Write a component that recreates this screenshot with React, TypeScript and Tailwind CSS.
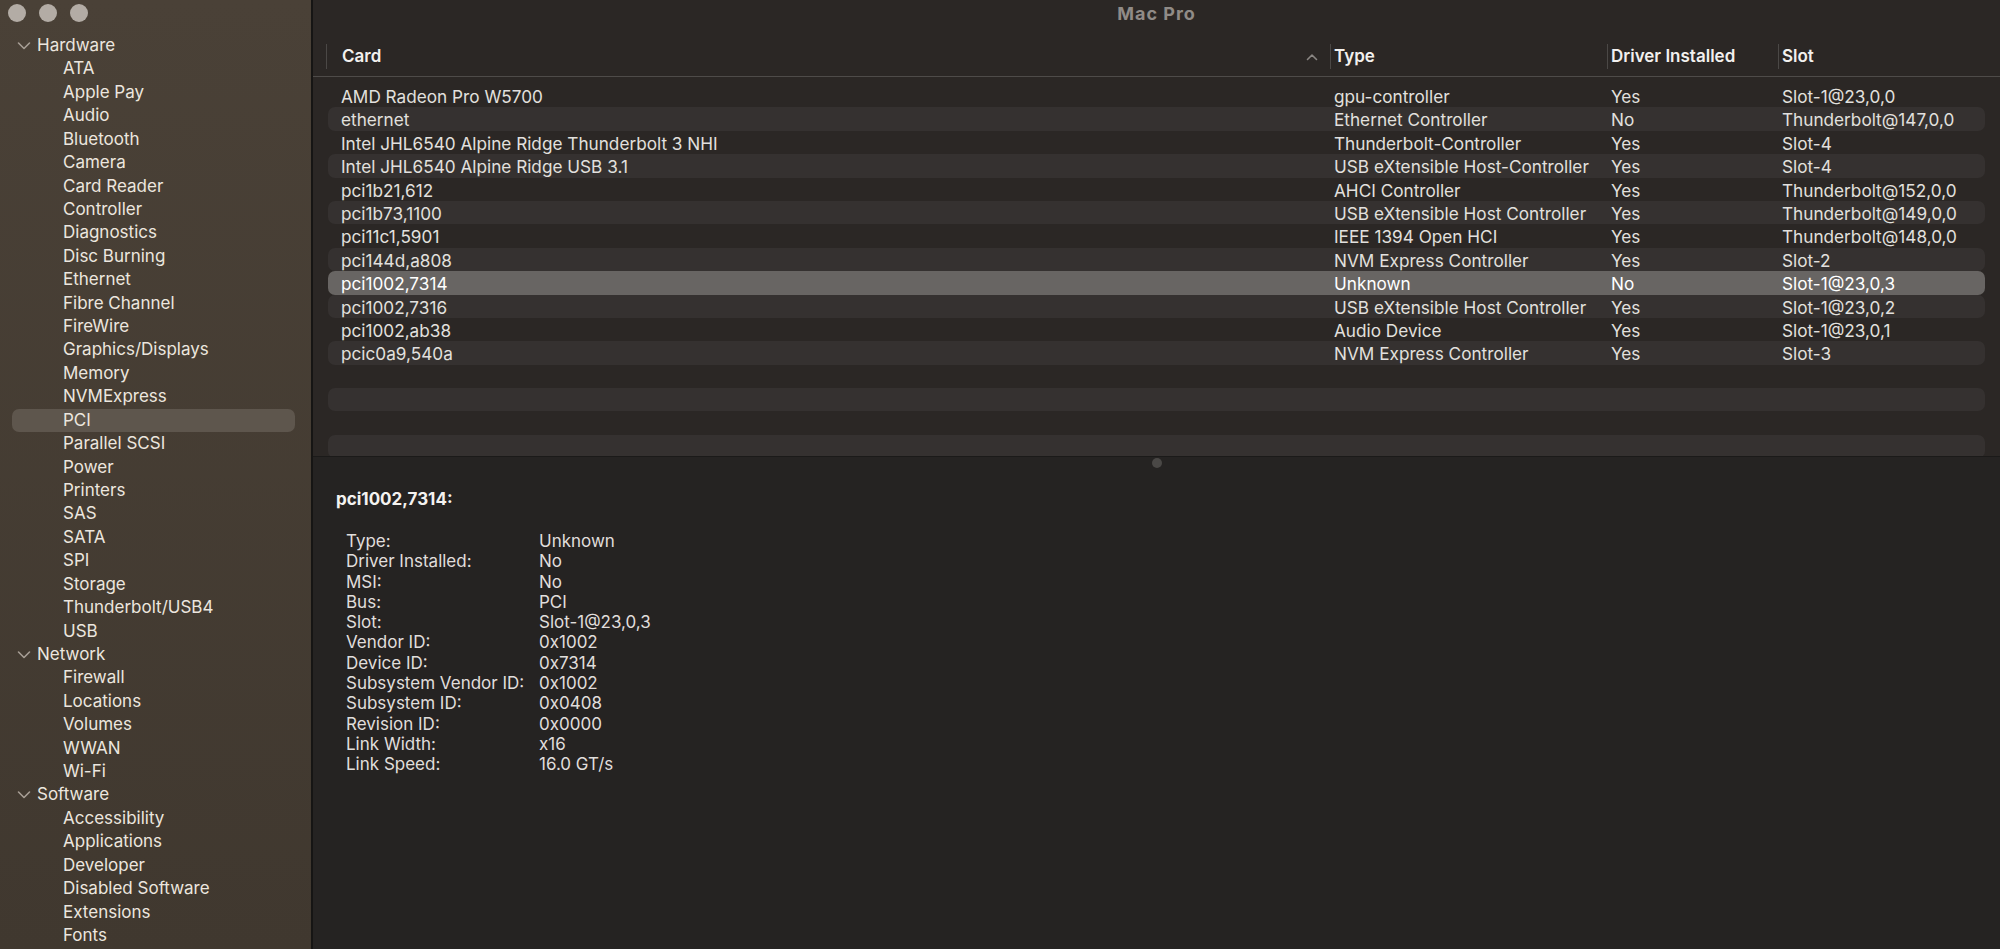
import React from "react";

type PciCard = {
  name: string;
  type: string;
  driver: string;
  slot: string;
};

const sidebar: { title: string; items: string[] }[] = [
  {
    title: "Hardware",
    items: [
      "ATA",
      "Apple Pay",
      "Audio",
      "Bluetooth",
      "Camera",
      "Card Reader",
      "Controller",
      "Diagnostics",
      "Disc Burning",
      "Ethernet",
      "Fibre Channel",
      "FireWire",
      "Graphics/Displays",
      "Memory",
      "NVMExpress",
      "PCI",
      "Parallel SCSI",
      "Power",
      "Printers",
      "SAS",
      "SATA",
      "SPI",
      "Storage",
      "Thunderbolt/USB4",
      "USB",
    ],
  },
  {
    title: "Network",
    items: ["Firewall", "Locations", "Volumes", "WWAN", "Wi-Fi"],
  },
  {
    title: "Software",
    items: [
      "Accessibility",
      "Applications",
      "Developer",
      "Disabled Software",
      "Extensions",
      "Fonts",
    ],
  },
];

const cards: PciCard[] = [
  { name: "AMD Radeon Pro W5700", type: "gpu-controller", driver: "Yes", slot: "Slot-1@23,0,0" },
  { name: "ethernet", type: "Ethernet Controller", driver: "No", slot: "Thunderbolt@147,0,0" },
  { name: "Intel JHL6540 Alpine Ridge Thunderbolt 3 NHI", type: "Thunderbolt-Controller", driver: "Yes", slot: "Slot-4" },
  { name: "Intel JHL6540 Alpine Ridge USB 3.1", type: "USB eXtensible Host-Controller", driver: "Yes", slot: "Slot-4" },
  { name: "pci1b21,612", type: "AHCI Controller", driver: "Yes", slot: "Thunderbolt@152,0,0" },
  { name: "pci1b73,1100", type: "USB eXtensible Host Controller", driver: "Yes", slot: "Thunderbolt@149,0,0" },
  { name: "pci11c1,5901", type: "IEEE 1394 Open HCI", driver: "Yes", slot: "Thunderbolt@148,0,0" },
  { name: "pci144d,a808", type: "NVM Express Controller", driver: "Yes", slot: "Slot-2" },
  { name: "pci1002,7314", type: "Unknown", driver: "No", slot: "Slot-1@23,0,3" },
  { name: "pci1002,7316", type: "USB eXtensible Host Controller", driver: "Yes", slot: "Slot-1@23,0,2" },
  { name: "pci1002,ab38", type: "Audio Device", driver: "Yes", slot: "Slot-1@23,0,1" },
  { name: "pcic0a9,540a", type: "NVM Express Controller", driver: "Yes", slot: "Slot-3" },
];

const details: [string, string][] = [
  ["Type:", "Unknown"],
  ["Driver Installed:", "No"],
  ["MSI:", "No"],
  ["Bus:", "PCI"],
  ["Slot:", "Slot-1@23,0,3"],
  ["Vendor ID:", "0x1002"],
  ["Device ID:", "0x7314"],
  ["Subsystem Vendor ID:", "0x1002"],
  ["Subsystem ID:", "0x0408"],
  ["Revision ID:", "0x0000"],
  ["Link Width:", "x16"],
  ["Link Speed:", "16.0 GT/s"],
];

const SELECTED = 8;
const cols = "grid grid-cols-[1002px_277px_171px_1fr]";

function Chevron() {
  return (
    <svg width="14" height="10" viewBox="0 0 14 10" className="mr-[6px] ml-[5px]">
      <polyline
        points="1.5,2 7,7.5 12.5,2"
        fill="none"
        stroke="#a79e95"
        strokeWidth="1.6"
        strokeLinecap="round"
        strokeLinejoin="round"
      />
    </svg>
  );
}

function Sidebar() {
  return (
    <aside className="flex w-[311px] shrink-0 flex-col bg-gradient-to-b from-[#4a4137] to-[#40382f] text-[17px] text-[#ece6df]">
      <div className="flex h-[34px] items-start gap-[13px] pl-[8px] pt-[4px]">
        <span className="h-[18px] w-[18px] rounded-full bg-[#b3aca5]" />
        <span className="h-[18px] w-[18px] rounded-full bg-[#b3aca5]" />
        <span className="h-[18px] w-[18px] rounded-full bg-[#b3aca5]" />
      </div>
      {sidebar.map((section) => (
        <div key={section.title}>
          <div className="ml-[12px] mr-[16px] flex h-[23.43px] items-center">
            <Chevron />
            <span>{section.title}</span>
          </div>
          {section.items.map((item) => (
            <div
              key={item}
              className={`ml-[12px] mr-[16px] flex h-[23.43px] items-center rounded-[7px] pl-[51px] ${
                item === "PCI" ? "bg-[#5e564d]" : ""
              }`}
            >
              {item}
            </div>
          ))}
        </div>
      ))}
    </aside>
  );
}

function HeaderCell({ label, first }: { label: string; first?: boolean }) {
  return (
    <div className="flex h-[25px] items-center">
      <span className="h-[25px] w-px bg-[#4b4846]" />
      <span className={first ? "pl-[15px]" : "pl-[3px]"}>{label}</span>
    </div>
  );
}

function CardTable() {
  const empty = [0, 1, 2, 3, 4];
  return (
    <div className="h-[430px] shrink-0 overflow-hidden">
      <div className="h-[51px] border-b border-[#4e4b49] px-[15px] pt-[18px] text-[17px] font-semibold text-[#f2f0ee]">
        <div className={cols}>
          <div className="-ml-[2px] flex items-center justify-between pr-[12px]">
            <HeaderCell label="Card" first />
            <svg width="12" height="8" viewBox="0 0 12 8">
              <polyline
                points="1.5,6.5 6,2 10.5,6.5"
                fill="none"
                stroke="#8a8683"
                strokeWidth="1.6"
                strokeLinecap="round"
                strokeLinejoin="round"
              />
            </svg>
          </div>
          <HeaderCell label="Type" />
          <HeaderCell label="Driver Installed" />
          <HeaderCell label="Slot" />
        </div>
      </div>
      <div className="px-[15px] pt-[7px] text-[17.2px] text-[#e2e0de]">
        {cards.map((card, i) => (
          <div
            key={card.name}
            className={`${cols} h-[23.4px] items-center rounded-[7px] ${
              i === SELECTED ? "bg-[#686563] text-white" : i % 2 === 1 ? "bg-[#353130]" : ""
            }`}
          >
            <span className="pl-[13px]">{card.name}</span>
            <span className="pl-[4px]">{card.type}</span>
            <span className="pl-[4px]">{card.driver}</span>
            <span className="pl-[4px]">{card.slot}</span>
          </div>
        ))}
        {empty.map((n) => (
          <div
            key={n}
            className={`h-[23.4px] rounded-[7px] ${n % 2 === 1 ? "bg-[#353130]" : ""}`}
          />
        ))}
      </div>
    </div>
  );
}

function DetailPane() {
  return (
    <div className="flex-1 border-t border-[#1b1a19] bg-[#252322] text-[17px] text-[#e0dedc]">
      <div className="flex h-[11px] items-end justify-center">
        <span className="h-[10px] w-[10px] rounded-full bg-[#4a4846]" />
      </div>
      <div className="pl-[23px] pt-[19px] font-bold text-[#f4f2f0]">pci1002,7314:</div>
      <div className="pl-[33px] pt-[19px]">
        {details.map(([label, value]) => (
          <div key={label} className="flex h-[20.3px] items-center">
            <span className="w-[193px] shrink-0">{label}</span>
            <span>{value}</span>
          </div>
        ))}
      </div>
    </div>
  );
}

export default function App() {
  return (
    <div className="flex h-[949px] w-[2000px] overflow-hidden font-['Inter','Noto_Sans',sans-serif]">
      <Sidebar />
      <div className="w-[2px] bg-[#161514]" />
      <main className="flex flex-1 flex-col bg-[#2b2725]">
        <div className="flex h-[26px] shrink-0 items-center justify-center text-[18px] font-bold tracking-[1px] text-[#908b87]">
          Mac Pro
        </div>
        <CardTable />
        <DetailPane />
      </main>
    </div>
  );
}
